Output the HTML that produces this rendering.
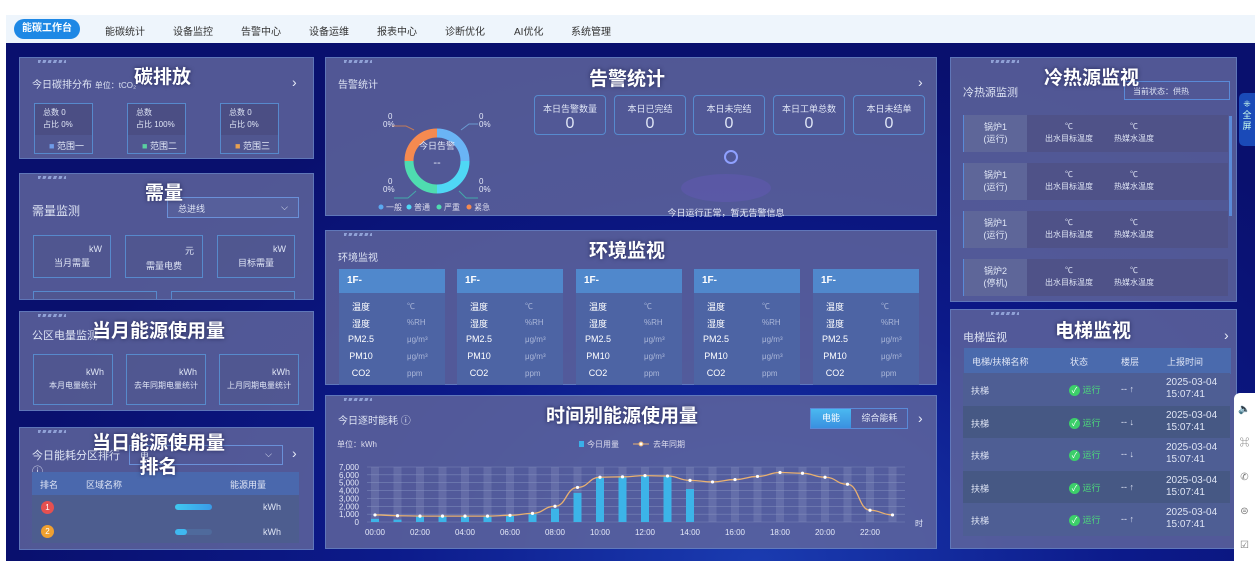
<!DOCTYPE html>
<html><head><meta charset="utf-8"><style>
*{margin:0;padding:0;box-sizing:border-box}
body{width:1255px;height:565px;background:#fff;position:relative;overflow:hidden;font-family:"Liberation Sans","Noto Sans CJK SC",sans-serif;color:#dfe5f5;font-size:9px}
.a{position:absolute}
#nav{left:6px;top:15px;width:1249px;height:28px;background:#eef5fc}
#nav span{position:absolute;top:8px;font-size:10px;color:#333}
#bg{left:6px;top:43px;width:1249px;height:518px;background:radial-gradient(ellipse at 60% 100%,#1a3bb0 0%,#0c1a8a 35%,#09106e 70%);}
.p{position:absolute;background:rgba(98,104,158,.82);border:1px solid rgba(110,150,220,.5)}
.deco{position:absolute;top:2px;left:18px;width:28px;height:3px;background:repeating-linear-gradient(110deg,#9fb3e6 0 3px,transparent 3px 5px);opacity:.8}
.t{position:absolute;font-size:11px;color:#dde3f3}
.big{position:absolute;font-size:19px;font-weight:bold;color:#fff;text-shadow:0 0 4px rgba(0,0,40,.6);white-space:nowrap}
.box{position:absolute;border:1px solid rgba(90,160,230,.7);background:rgba(80,85,140,.5)}
.arr{position:absolute;font-size:14px;color:#e8ecf8}
.c{text-align:center}
</style></head><body>
<div class="a" id="nav">
<span style="left:8px;top:4px;width:66px;height:20px;border-radius:10px;background:#1e88e5;color:#fff;font-weight:bold;text-align:center;line-height:20px">能碳工作台</span>
<span style="left:99px">能碳统计</span><span style="left:167px">设备监控</span><span style="left:235px">告警中心</span><span style="left:303px">设备运维</span><span style="left:371px">报表中心</span><span style="left:439px">诊断优化</span><span style="left:508px">AI优化</span><span style="left:565px">系统管理</span>
</div>
<div class="a" id="bg"></div>

<div class="p" style="left:19px;top:57px;width:295px;height:102px"><div class="deco"></div>
<div class="t" style="left:12px;top:18px;font-size:10px">今日碳排分布 <span style="font-size:8px">单位：tCO₂</span></div><div class="arr" style="left:272px;top:16px">›</div>
<div class="box" style="left:14px;top:45px;width:59px;height:51px"><div style="height:31px;background:rgba(70,70,120,.5);padding:3px 0 0 8px;font-size:8px;line-height:12px">总数 0<br>占比 0%</div><div style="font-size:9px;padding:4px 0 0 14px"><span style="color:#6f9be8">■</span> 范围一</div></div>
<div class="box" style="left:107px;top:45px;width:59px;height:51px"><div style="height:31px;background:rgba(70,70,120,.5);padding:3px 0 0 8px;font-size:8px;line-height:12px">总数<br>占比 100%</div><div style="font-size:9px;padding:4px 0 0 14px"><span style="color:#5ad0a0">■</span> 范围二</div></div>
<div class="box" style="left:200px;top:45px;width:59px;height:51px"><div style="height:31px;background:rgba(70,70,120,.5);padding:3px 0 0 8px;font-size:8px;line-height:12px">总数 0<br>占比 0%</div><div style="font-size:9px;padding:4px 0 0 14px"><span style="color:#e8a050">■</span> 范围三</div></div>
</div>
<div class="big" style="left:134px;top:62px">碳排放</div>

<div class="p" style="left:19px;top:173px;width:295px;height:127px;overflow:hidden"><div class="deco"></div>
<div class="t" style="left:12px;top:28px;font-size:12px">需量监测</div>
<div class="a" style="left:147px;top:23px;width:132px;height:21px;border:1px solid #6a90d8;background:rgba(90,100,160,.6);font-size:9px;padding:4px 10px">总进线<span style="float:right">⌵</span></div>
<div class="box" style="left:13px;top:61px;width:78px;height:43px"><div style="text-align:right;padding:8px 8px 0 0">kW</div><div class="c" style="margin-top:2px">当月需量</div></div>
<div class="box" style="left:105px;top:61px;width:78px;height:43px"><div style="text-align:right;padding:8px 8px 0 0">元</div><div class="c" style="margin-top:2px">需量电费</div></div>
<div class="box" style="left:197px;top:61px;width:78px;height:43px"><div style="text-align:right;padding:8px 8px 0 0">kW</div><div class="c" style="margin-top:2px">目标需量</div></div>
<div class="box" style="left:13px;top:117px;width:124px;height:20px"></div><div class="box" style="left:151px;top:117px;width:124px;height:20px"></div>
</div>
<div class="big" style="left:145px;top:178px">需量</div>

<div class="p" style="left:19px;top:311px;width:295px;height:100px"><div class="deco"></div>
<div class="t" style="left:12px;top:15px">公区电量监测</div>
<div class="box" style="left:13px;top:42px;width:80px;height:51px"><div style="text-align:right;padding:12px 8px 0 0">kWh</div><div class="c" style="margin-top:3px;font-size:8px">本月电量统计</div></div>
<div class="box" style="left:106px;top:42px;width:80px;height:51px"><div style="text-align:right;padding:12px 8px 0 0">kWh</div><div class="c" style="margin-top:3px;font-size:8px">去年同期电量统计</div></div>
<div class="box" style="left:199px;top:42px;width:80px;height:51px"><div style="text-align:right;padding:12px 8px 0 0">kWh</div><div class="c" style="margin-top:3px;font-size:8px">上月同期电量统计</div></div>
</div>
<div class="big" style="left:92px;top:316px">当月能源使用量</div>

<div class="p" style="left:19px;top:427px;width:295px;height:123px;overflow:hidden"><div class="deco"></div>
<div class="t" style="left:12px;top:19px">今日能耗分区排行<br>ⓘ</div>
<div class="a" style="left:109px;top:17px;width:154px;height:20px;border:1px solid #6a90d8;padding:3px 10px">电<span style="float:right">⌵</span></div>
<div class="arr" style="left:272px;top:17px">›</div>
<div class="a" style="left:12px;top:44px;width:267px;height:23px;background:#4a68ad;font-size:9px;padding:6px 8px">排名<span style="margin-left:28px">区域名称</span><span style="margin-left:108px">能源用量</span></div>
<div class="a" style="left:12px;top:67px;width:267px;height:48px;background:#4d5d8f"></div>
<div class="a" style="left:21px;top:73px;width:13px;height:13px;border-radius:50%;background:#e55050;color:#fff;text-align:center;line-height:13px;font-size:8px">1</div>
<div class="a" style="left:21px;top:97px;width:13px;height:13px;border-radius:50%;background:#f0a030;color:#fff;text-align:center;line-height:13px;font-size:8px">2</div>
<div class="a" style="left:155px;top:76px;width:37px;height:6px;border-radius:3px;background:linear-gradient(90deg,#3fc8f0,#3a9ae8)"></div>
<div class="a" style="left:155px;top:101px;width:37px;height:6px;border-radius:3px;background:#4f6a9c"><div style="width:12px;height:6px;border-radius:3px;background:#3fb8f0"></div></div>
<div class="a" style="left:243px;top:74px">kWh</div><div class="a" style="left:243px;top:99px">kWh</div>
</div>
<div class="big" style="left:92px;top:432px;text-align:center;line-height:24px">当日能源使用量<br>排名</div>

<div class="p" style="left:325px;top:57px;width:612px;height:159px"><div class="deco"></div>
<div class="t" style="left:12px;top:18px;font-size:10px">告警统计</div><div class="arr" style="left:592px;top:16px">›</div>
<svg class="a" style="left:0;top:0" width="612" height="159">
<g transform="translate(111,103)" fill="none" stroke-width="9">
<path d="M0,-28 A28,28 0 0 1 28,0" stroke="#6ab4f5"/><path d="M28,0 A28,28 0 0 1 0,28" stroke="#4fd8f5"/><path d="M0,28 A28,28 0 0 1 -28,0" stroke="#4fdcb0"/><path d="M-28,0 A28,28 0 0 1 0,-28" stroke="#f58a50"/>
</g>
<g stroke-width="1" fill="none"><path d="M88,72 L80,68 L66,68" stroke="#c07a5a"/><path d="M135,72 L143,66 L152,66" stroke="#6a9ad0"/><path d="M90,133 L82,140 L68,140" stroke="#4aa"/><path d="M133,133 L140,140 L152,140" stroke="#4aa"/></g>
<text x="111" y="91" fill="#e4e8f8" font-size="9" text-anchor="middle">今日告警</text><text x="111" y="108" fill="#e4e8f8" font-size="11" text-anchor="middle">--</text>
<g fill="#e4e8f8" font-size="8"><text x="62" y="61">0</text><text x="57" y="69">0%</text><text x="153" y="61">0</text><text x="153" y="69">0%</text><text x="62" y="126">0</text><text x="57" y="134">0%</text><text x="153" y="126">0</text><text x="153" y="134">0%</text></g>
<g font-size="8" fill="#dde"><circle cx="55" cy="149" r="2.5" fill="#5aa8f0"/><text x="60" y="152">一般</text><circle cx="83" cy="149" r="2.5" fill="#4fd8f5"/><text x="88" y="152">普通</text><circle cx="113" cy="149" r="2.5" fill="#4fdcb0"/><text x="118" y="152">严重</text><circle cx="143" cy="149" r="2.5" fill="#f58a50"/><text x="148" y="152">紧急</text></g>
<ellipse cx="400" cy="130" rx="45" ry="14" fill="#6a5ac0" opacity=".35"/><circle cx="405" cy="99" r="6" fill="none" stroke="#8fa0ff" stroke-width="2"/>
<text x="400" y="158" fill="#e4e8f8" font-size="9" text-anchor="middle">今日运行正常，暂无告警信息</text>
</svg>
<div class="box" style="left:208px;top:37px;width:72px;height:40px;border-radius:4px;background:none"><div class="c" style="font-size:9px;margin-top:6px">本日告警数量</div><div class="c" style="font-size:16px">0</div></div>
<div class="box" style="left:288px;top:37px;width:72px;height:40px;border-radius:4px;background:none"><div class="c" style="font-size:9px;margin-top:6px">本日已完结</div><div class="c" style="font-size:16px">0</div></div>
<div class="box" style="left:367px;top:37px;width:72px;height:40px;border-radius:4px;background:none"><div class="c" style="font-size:9px;margin-top:6px">本日未完结</div><div class="c" style="font-size:16px">0</div></div>
<div class="box" style="left:447px;top:37px;width:72px;height:40px;border-radius:4px;background:none"><div class="c" style="font-size:9px;margin-top:6px">本日工单总数</div><div class="c" style="font-size:16px">0</div></div>
<div class="box" style="left:527px;top:37px;width:72px;height:40px;border-radius:4px;background:none"><div class="c" style="font-size:9px;margin-top:6px">本日未结单</div><div class="c" style="font-size:16px">0</div></div>
</div>
<div class="big" style="left:589px;top:64px">告警统计</div>

<div class="p" style="left:325px;top:230px;width:612px;height:155px;overflow:hidden"><div class="deco"></div>
<div class="t" style="left:12px;top:18px;font-size:10px">环境监视</div>
</div>
<div id="env"></div>
<div class="big" style="left:589px;top:236px">环境监视</div>

<div class="p" style="left:325px;top:395px;width:612px;height:154px"><div class="deco"></div>
<div class="t" style="left:12px;top:16px;font-size:10px">今日逐时能耗 ⓘ</div>
<div class="a" style="left:484px;top:12px;width:98px;height:21px;border:1px solid #5a8ad8;font-size:9px"><div style="position:absolute;left:0;top:0;width:40px;height:19px;background:linear-gradient(#4ab8f0,#3a90e0);color:#fff;text-align:center;line-height:19px">电能</div><div style="position:absolute;left:40px;top:0;width:57px;text-align:center;line-height:19px">综合能耗</div></div>
<div class="arr" style="left:592px;top:14px">›</div>
</div>
<svg class="a" style="left:325px;top:395px" width="612" height="154" id="ch"></svg>
<div class="big" style="left:546px;top:401px">时间别能源使用量</div>

<div class="p" style="left:950px;top:57px;width:287px;height:245px;overflow:hidden"><div class="deco" style="left:40px"></div>
<div class="t" style="left:12px;top:26px;font-size:11px">冷热源监测</div>
<div class="a" style="left:173px;top:23px;width:106px;height:19px;border:1px solid #5a8ad8;font-size:8px;padding:4px 8px">当前状态：供热</div>
<div class="a" style="left:278px;top:58px;width:3px;height:100px;background:#5a8ad8"></div>
</div>
<div id="cold"></div>
<div class="big" style="left:1044px;top:63px">冷热源监视</div>

<div class="p" style="left:950px;top:309px;width:287px;height:240px;overflow:hidden"><div class="deco" style="left:40px"></div>
<div class="t" style="left:12px;top:19px;font-size:11px">电梯监视</div><div class="arr" style="left:273px;top:17px">›</div>
<div class="a" style="left:13px;top:38px;width:267px;height:26px;background:#4a6aad;font-size:9px;padding:7px 8px">电梯/扶梯名称<span style="position:absolute;left:106px">状态</span><span style="position:absolute;left:157px">楼层</span><span style="position:absolute;left:203px">上报时间</span></div>
</div>
<div id="elev"></div>
<div class="big" style="left:1055px;top:316px">电梯监视</div>

<div class="a" style="left:1239px;top:93px;width:16px;height:53px;background:#1a4ab8;border-radius:5px 0 0 5px;font-size:9px;color:#cfe;text-align:center;line-height:11px;padding-top:6px">⁜<br>全<br>屏</div>
<div class="a" style="left:1234px;top:393px;width:21px;height:168px;background:#fff;border-radius:6px 0 0 0;color:#777;font-size:10px;text-align:center;line-height:34px">🔈<br>⌘<br>✆<br>⊜<br>☑</div>

<script>
var e='',xs=[339,457,576,694,813];
xs.forEach(function(x){e+='<div class="a" style="left:'+x+'px;top:269px;width:106px;height:116px;background:#4d64a4"><div style="height:24px;background:#5088cc;font-weight:bold;font-size:10px;padding:6px 8px;color:#fff">1F-</div>';
[['温度','℃'],['湿度','%RH'],['PM2.5','μg/m³'],['PM10','μg/m³'],['CO2','ppm']].forEach(function(r,i){e+='<div style="position:absolute;top:'+(31+i*17)+'px;left:0;width:44px;text-align:center;font-size:9px;color:#fff">'+r[0]+'</div><div style="position:absolute;top:'+(32+i*17)+'px;left:68px;font-size:8px;color:#aab6d8">'+r[1]+'</div>'});e+='</div>'});
document.getElementById('env').innerHTML=e;
var c='',ys=[115,163,211,259],nm=[['锅炉1','(运行)'],['锅炉1','(运行)'],['锅炉1','(运行)'],['锅炉2','(停机)']];
ys.forEach(function(y,i){c+='<div class="a" style="left:963px;top:'+y+'px;width:265px;height:37px;background:#4f5288;border-left:1px solid #5a8ad8"><div style="position:absolute;left:0;top:0;width:63px;height:37px;background:#5e6699;text-align:center;font-size:9px;padding-top:6px;line-height:12px">'+nm[i][0]+'<br>'+nm[i][1]+'</div><div style="position:absolute;left:75px;top:6px;width:60px;text-align:center;font-size:8px;line-height:12px">℃<br>出水目标温度</div><div style="position:absolute;left:140px;top:6px;width:60px;text-align:center;font-size:8px;line-height:12px">℃<br>热媒水温度</div></div>'});
document.getElementById('cold').innerHTML=c;
var h='',ar=['↑','↓','↓','↑','↑'];
for(var i=0;i<5;i++){var y=373+i*32.5;h+='<div class="a" style="left:963px;top:'+y+'px;width:267px;height:33px;background:'+(i%2?'#465884':'#4e5e94')+';font-size:9px"><span style="position:absolute;left:8px;top:11px">扶梯</span><span style="position:absolute;left:106px;top:10px;color:#4ddc7a"><span style="display:inline-block;width:11px;height:11px;border-radius:50%;background:#3ccf6a;color:#fff;text-align:center;line-height:11px;font-size:8px">✓</span> 运行</span><span style="position:absolute;left:158px;top:11px">-- '+ar[i]+'</span><span style="position:absolute;left:203px;top:4px;line-height:12px;font-size:10px">2025-03-04<br>15:07:41</span></div>'}
document.getElementById('elev').innerHTML=h;
var s='',X0=50,st=22.5,Y0=127,k=55/7000;
var t=[400,300,700,700,700,700,800,1000,1700,3700,5600,5700,5900,5800,4200];
var l=[900,800,750,750,750,750,850,1100,2000,4400,5700,5750,5900,5850,5300,5100,5400,5800,6300,6200,5700,4800,1500,900];
s+='<text x="12" y="52" font-size="8" fill="#dde">单位：kWh</text><rect x="254" y="46" width="5" height="6" fill="#3ab0e8"/><text x="262" y="52" font-size="8" fill="#dde">今日用量</text><path d="M308,49 h16" stroke="#e8b070"/><circle cx="316" cy="49" r="2" fill="#fff" stroke="#e8b070"/><text x="328" y="52" font-size="8" fill="#dde">去年同期</text>';
for(var j=0;j<=7;j++){var yy=Y0-j*1000*k;s+='<line x1="42" x2="580" y1="'+yy+'" y2="'+yy+'" stroke="#7a86b8" stroke-width=".6"/><text x="34" y="'+(yy+3)+'" font-size="8" fill="#e4e8f8" text-anchor="end">'+(j?j+',000':'0')+'</text>'}
for(j=0;j<24;j++){var x=X0+j*st;s+='<rect x="'+(x-4)+'" y="'+(Y0-55)+'" width="8" height="55" fill="#8a94c4" opacity=".3"/>';if(j<t.length)s+='<rect x="'+(x-4)+'" y="'+(Y0-t[j]*k)+'" width="8" height="'+(t[j]*k)+'" fill="#3cb4e8"/>';if(j%2==0)s+='<text x="'+x+'" y="140" font-size="8" fill="#e4e8f8" text-anchor="middle">'+(j<10?'0':'')+j+':00</text>'}
var p='M'+X0+','+(Y0-l[0]*k);for(j=1;j<24;j++){var xa=X0+(j-1)*st,xb=X0+j*st;p+=' C'+(xa+st/2)+','+(Y0-l[j-1]*k)+' '+(xb-st/2)+','+(Y0-l[j]*k)+' '+xb+','+(Y0-l[j]*k)}
s+='<path d="'+p+'" fill="none" stroke="#e8b070" stroke-width="1.3"/>';
for(j=0;j<24;j++)s+='<circle cx="'+(X0+j*st)+'" cy="'+(Y0-l[j]*k)+'" r="1.6" fill="#fff"/>';
s+='<text x="590" y="131" font-size="8" fill="#e4e8f8">时</text>';
document.getElementById('ch').innerHTML=s;
</script>
</body></html>
